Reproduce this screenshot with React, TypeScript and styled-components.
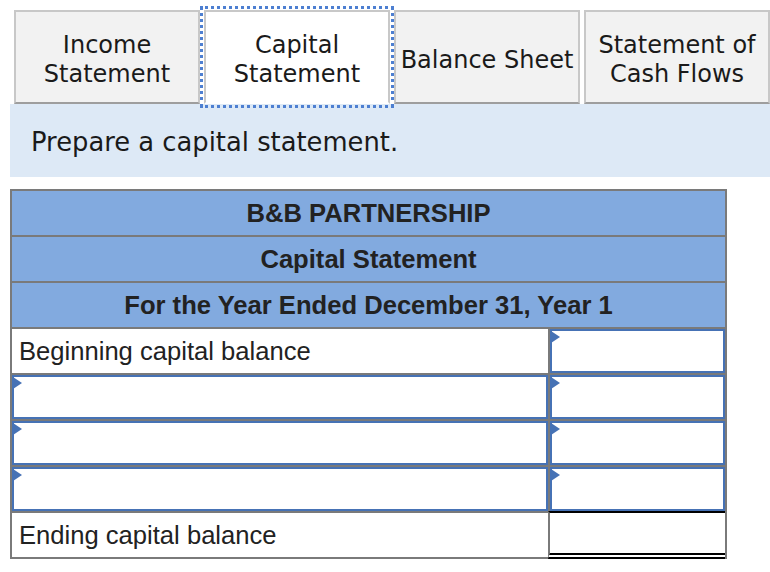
import styled, { createGlobalStyle, css } from "styled-components";

const GlobalStyle = createGlobalStyle`
  body {
    margin: 0;
    background: #ffffff;
  }
`;

const tabs = [
  { id: "income", lines: ["Income", "Statement"] },
  { id: "capital", lines: ["Capital", "Statement"] },
  { id: "balance", lines: ["Balance Sheet"] },
  { id: "cash", lines: ["Statement of", "Cash Flows"] },
];

type Row = { label?: string; entry: "label" | "amount" | "both" | "total" };

const rows: Row[] = [
  { label: "Beginning capital balance", entry: "amount" },
  { entry: "both" },
  { entry: "both" },
  { entry: "both" },
  { label: "Ending capital balance", entry: "total" },
];

const App = () => {
  const active = "capital";

  return (
    <>
      <GlobalStyle />
      <StyledPage>
        <StyledTabRow>
          {tabs.map((tab) => (
            <StyledTab key={tab.id} $active={tab.id === active}>
              {tab.lines.map((line) => (
                <span key={line}>{line}</span>
              ))}
            </StyledTab>
          ))}
        </StyledTabRow>
        <StyledPrompt>Prepare a capital statement.</StyledPrompt>

        <StyledSheet>
          <StyledTitle>B&amp;B PARTNERSHIP</StyledTitle>
          <StyledTitle>Capital Statement</StyledTitle>
          <StyledTitle>For the Year Ended December 31, Year 1</StyledTitle>
          {rows.map((row, i) => (
            <StyledRow key={i} $last={row.entry === "total"}>
              <StyledLabel $last={row.entry === "total"}>
                {row.entry === "both" ? <StyledEntry /> : row.label}
              </StyledLabel>
              <StyledAmount $total={row.entry === "total"}>
                {row.entry !== "total" && <StyledEntry />}
              </StyledAmount>
            </StyledRow>
          ))}
        </StyledSheet>
      </StyledPage>
    </>
  );
};

export default App;

const StyledPage = styled.div`
  padding: 10px 0 0 10px;
`;

const StyledTabRow = styled.div`
  display: flex;
  gap: 4px;
  padding-left: 4px;
`;

const StyledTab = styled.div<{ $active: boolean }>`
  flex: 1;
  height: 94px;
  box-sizing: border-box;
  display: flex;
  flex-direction: column;
  align-items: center;
  justify-content: center;
  padding-top: 6px;
  border: 2px solid #c8c8c8;
  border-bottom-color: #9e9e9e;
  background: #f2f2f2;
  font-family: "DejaVu Sans", Verdana, sans-serif;
  font-size: 24px;
  line-height: 1.2;
  color: #1a1a1a;
  text-align: center;

  ${({ $active }) =>
    $active &&
    css`
      background: #ffffff;
      border-bottom-color: #ffffff;
      outline: 3px dotted #4d7fd1;
      outline-offset: 1px;
      position: relative;
      z-index: 1;
    `}
`;

const StyledPrompt = styled.div`
  height: 73px;
  box-sizing: border-box;
  display: flex;
  align-items: center;
  padding: 3px 0 0 21px;
  background: #dde9f6;
  font-family: "DejaVu Sans", Verdana, sans-serif;
  font-size: 25.8px;
  color: #1a1a1a;
`;

const StyledSheet = styled.div`
  width: 717px;
  box-sizing: border-box;
  margin-top: 12px;
  border: 2px solid #7a7a7a;
  border-top: none;
  border-bottom: none;
  font-family: "Liberation Sans", Arial, sans-serif;
  font-size: 25.6px;
  color: #222222;
`;

const StyledTitle = styled.div`
  height: 46px;
  box-sizing: border-box;
  display: flex;
  align-items: center;
  justify-content: center;
  border-top: 2px solid #7a7a7a;
  background: #82aadf;
  font-weight: bold;
`;

const StyledRow = styled.div<{ $last: boolean }>`
  display: flex;
  height: ${({ $last }) => ($last ? 48 : 46)}px;
`;

const StyledLabel = styled.div<{ $last: boolean }>`
  width: 536px;
  box-sizing: border-box;
  display: flex;
  align-items: center;
  padding-left: 7px;
  border-top: 2px solid #7a7a7a;
  border-bottom: ${({ $last }) => ($last ? "2px solid #7a7a7a" : "none")};

  &:has(> div) {
    padding-left: 0;
  }
`;

const StyledAmount = styled.div<{ $total: boolean }>`
  flex: 1;
  display: flex;
  border-left: 2px solid #7a7a7a;
  border-top: 2px solid ${({ $total }) => ($total ? "#000000" : "#7a7a7a")};
  ${({ $total }) =>
    $total &&
    css`
      border-bottom: 6px double #000000;
    `}
`;

const StyledEntry = styled.div`
  position: relative;
  flex: 1;
  align-self: stretch;
  border: 2px solid #4672b5;
  background: #ffffff;

  &::before {
    content: "";
    position: absolute;
    left: -1px;
    top: 0;
    border-left: 9px solid #4672b5;
    border-top: 6.5px solid transparent;
    border-bottom: 6.5px solid transparent;
  }
`;
